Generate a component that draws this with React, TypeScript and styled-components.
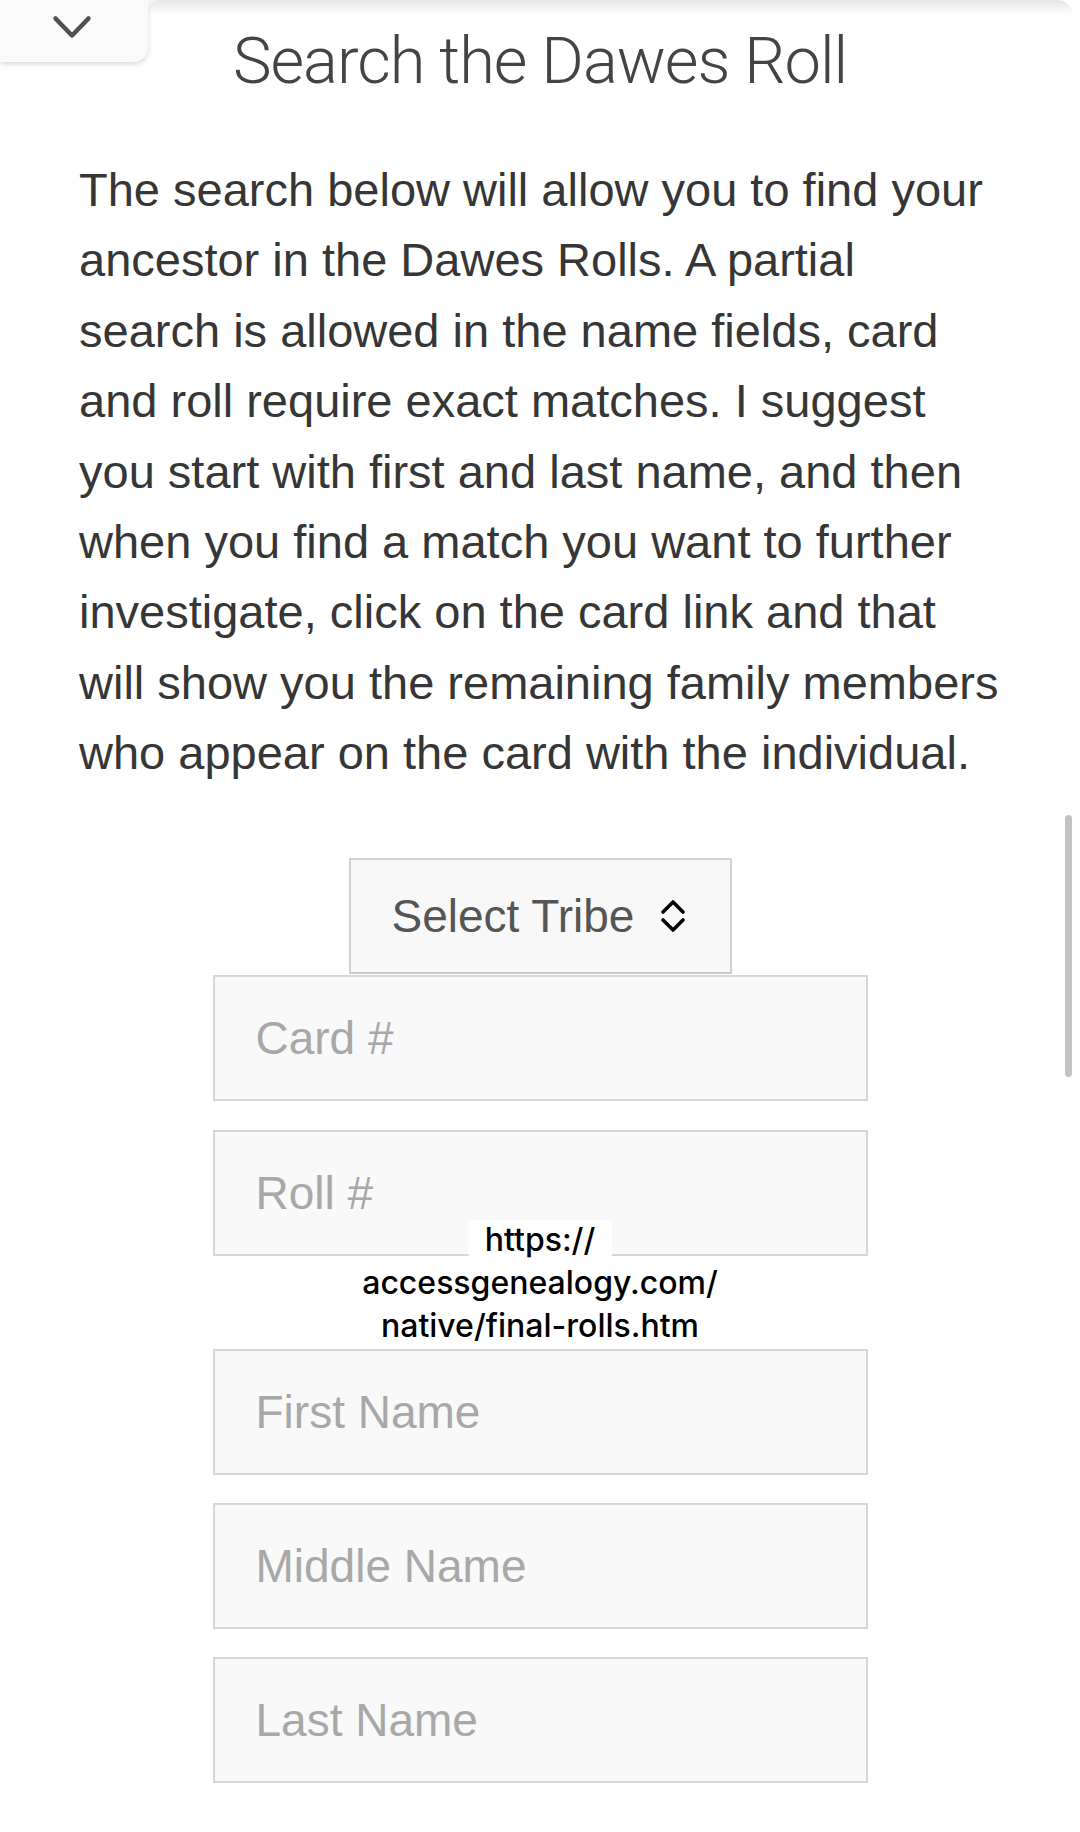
import React from "react";
import styled, { createGlobalStyle } from "styled-components";

const GlobalStyle = createGlobalStyle`
  html, body {
    margin: 0;
    padding: 0;
    background: #ffffff;
  }
  body {
    font-family: "Liberation Sans", Arial, sans-serif;
    -webkit-font-smoothing: antialiased;
  }
  * { box-sizing: border-box; }
`;

const Page = styled.div`
  position: relative;
  width: 1080px;
  min-height: 1832px;
  overflow: hidden;
  background: #ffffff;
`;

const TopShade = styled.div`
  position: absolute;
  top: 0;
  left: 0;
  right: 8px;
  height: 14px;
  background: linear-gradient(#e4e4e4, rgba(255, 255, 255, 0));
  border-top-right-radius: 14px;
  pointer-events: none;
`;

const CollapseTab = styled.button`
  position: absolute;
  top: 0;
  left: 0;
  width: 148px;
  height: 62px;
  border: none;
  padding: 0;
  background: #fafafa;
  border-bottom-right-radius: 14px;
  box-shadow: 0 2px 5px rgba(0, 0, 0, 0.16);
  display: flex;
  align-items: flex-start;
  justify-content: center;
  padding-top: 15px;
  padding-right: 4px;
  &::after {
    content: "";
    position: absolute;
    top: 0;
    left: 100%;
    width: 12px;
    height: 12px;
    background: radial-gradient(
      circle at 100% 100%,
      rgba(250, 250, 250, 0) 11.5px,
      #f3f3f3 12px
    );
  }
`;

const Title = styled.h1`
  margin: 0;
  padding-top: 23px;
  text-align: center;
  font-family: Roboto, "Liberation Sans", sans-serif;
  font-weight: 300;
  font-size: 65px;
  line-height: 76px;
  letter-spacing: -1px;
  color: #444444;
`;

const Intro = styled.p`
  margin: 56px 0 0;
  padding: 0 60px 0 79px;
  font-family: "Liberation Sans", Arial, sans-serif;
  font-size: 47px;
  line-height: 70.4px;
  color: #363636;
  white-space: nowrap;
`;

const Form = styled.form`
  margin-top: 69px;
  display: flex;
  flex-direction: column;
  align-items: center;
`;

const SelectBox = styled.div`
  width: 383px;
  height: 116px;
  border: 2px solid #d2d2d2;
  border-bottom-color: #c8c8c8;
  background: #f8f8f8;
  display: flex;
  align-items: center;
  padding-left: 41px;
  gap: 25px;
  font-size: 46px;
  color: #555555;
`;

const SelectLabel = styled.span`
  line-height: 1;
`;

const Fields = styled.div`
  margin-top: 1px;
  width: 655px;
  display: flex;
  flex-direction: column;
`;

const Field = styled.input<{ $gapBefore?: number }>`
  display: block;
  width: 100%;
  height: 126px;
  margin: ${(p) => p.$gapBefore ?? 0}px 0 0;
  border: 2px solid #d6d6d6;
  border-radius: 0;
  background: #f9f9f9;
  padding: 0 41px;
  font-family: "Liberation Sans", Arial, sans-serif;
  font-size: 46px;
  color: #333333;
  outline: none;
  &::placeholder {
    color: #a8a8a8;
  }
`;

const LinkSpacer = styled.div`
  position: relative;
  height: 93px;
`;

const LinkPreview = styled.div`
  position: absolute;
  top: -38px;
  left: 50%;
  transform: translateX(-50%);
  white-space: nowrap;
  text-align: center;
  font-family: Inter, "Liberation Sans", sans-serif;
  font-weight: 500;
  font-size: 32px;
  line-height: 43px;
  color: #000000;
`;

const PreviewLine = styled.span`
  background: #ffffff;
  padding: 0 17px;
  border-radius: 6px;
  -webkit-box-decoration-break: clone;
  box-decoration-break: clone;
`;

const ScrollThumb = styled.div`
  position: absolute;
  top: 815px;
  right: 8px;
  width: 7px;
  height: 262px;
  border-radius: 4px;
  background: #c3c3c3;
`;

const ChevronDown = () => (
  <svg width="40" height="25" viewBox="0 0 40 25" fill="none">
    <polyline
      points="3.5,3.5 20,20.5 36.5,3.5"
      stroke="#505050"
      strokeWidth="4.5"
      strokeLinecap="round"
      strokeLinejoin="round"
    />
  </svg>
);

const UpDownChevron = () => (
  <svg width="28" height="38" viewBox="0 0 28 38" fill="none">
    <polyline
      points="4,15 14,5 24,15"
      stroke="#000000"
      strokeWidth="3.6"
      strokeLinecap="round"
      strokeLinejoin="round"
    />
    <polyline
      points="4,23 14,33 24,23"
      stroke="#000000"
      strokeWidth="3.6"
      strokeLinecap="round"
      strokeLinejoin="round"
    />
  </svg>
);

const introLines = [
  "The search below will allow you to find your",
  "ancestor in the Dawes Rolls. A partial",
  "search is allowed in the name fields, card",
  "and roll require exact matches. I suggest",
  "you start with first and last name, and then",
  "when you find a match you want to further",
  "investigate, click on the card link and that",
  "will show you the remaining family members",
  "who appear on the card with the individual.",
];

export default function App() {
  return (
    <Page>
      <GlobalStyle />
      <TopShade />
      <CollapseTab type="button" aria-label="Collapse">
        <ChevronDown />
      </CollapseTab>
      <Title>Search the Dawes Roll</Title>
      <Intro>
        {introLines.map((line, i) => (
          <React.Fragment key={i}>
            {line}
            {i < introLines.length - 1 && <br />}
          </React.Fragment>
        ))}
      </Intro>
      <Form onSubmit={(e) => e.preventDefault()}>
        <SelectBox>
          <SelectLabel>Select Tribe</SelectLabel>
          <UpDownChevron />
        </SelectBox>
        <Fields>
          <Field placeholder="Card #" />
          <Field placeholder="Roll #" $gapBefore={29} />
          <LinkSpacer>
            <LinkPreview>
              <PreviewLine>
                https://
                <br />
                accessgenealogy.com/
                <br />
                native/final-rolls.htm
              </PreviewLine>
            </LinkPreview>
          </LinkSpacer>
          <Field placeholder="First Name" />
          <Field placeholder="Middle Name" $gapBefore={28} />
          <Field placeholder="Last Name" $gapBefore={28} />
        </Fields>
      </Form>
      <ScrollThumb />
    </Page>
  );
}
